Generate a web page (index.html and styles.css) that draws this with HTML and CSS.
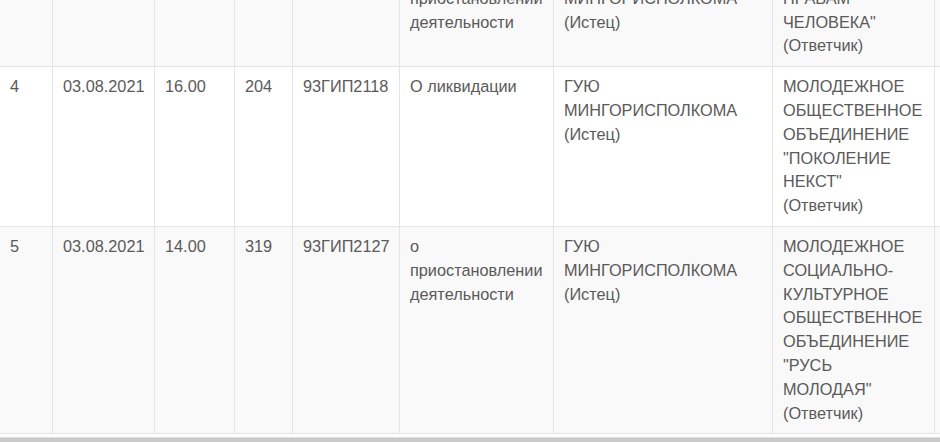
FILE: index.html
```html
<!DOCTYPE html>
<html lang="ru">
<head>
<meta charset="utf-8">
<title>Дела</title>
<link rel="stylesheet" href="styles.css">
</head>
<body>
<div class="viewport">
  <table class="cases">
    <colgroup>
      <col class="c-num"><col class="c-date"><col class="c-time"><col class="c-room"><col class="c-case"><col class="c-subj"><col class="c-plt"><col class="c-def"><col class="c-extra">
    </colgroup>
    <tbody>
      <tr class="odd">
        <td>3</td>
        <td>03.08.2021</td>
        <td>15.00</td>
        <td>204</td>
        <td>93ГИП2117</td>
        <td>о приостановлении деятельности</td>
        <td>ГУЮ МИНГОРИСПОЛКОМА (Истец)</td>
        <td class="def">ОО "ЦЕНТР ПО ПРАВАМ ЧЕЛОВЕКА" (Ответчик)</td>
        <td></td>
      </tr>
      <tr>
        <td>4</td>
        <td>03.08.2021</td>
        <td>16.00</td>
        <td>204</td>
        <td>93ГИП2118</td>
        <td>О ликвидации</td>
        <td>ГУЮ МИНГОРИСПОЛКОМА (Истец)</td>
        <td class="def">МОЛОДЕЖНОЕ ОБЩЕСТВЕННОЕ ОБЪЕДИНЕНИЕ "ПОКОЛЕНИЕ НЕКСТ" (Ответчик)</td>
        <td></td>
      </tr>
      <tr class="odd">
        <td>5</td>
        <td>03.08.2021</td>
        <td>14.00</td>
        <td>319</td>
        <td>93ГИП2127</td>
        <td>о приостановлении деятельности</td>
        <td>ГУЮ МИНГОРИСПОЛКОМА (Истец)</td>
        <td class="def">МОЛОДЕЖНОЕ СОЦИАЛЬНО-КУЛЬТУРНОЕ ОБЩЕСТВЕННОЕ ОБЪЕДИНЕНИЕ "РУСЬ МОЛОДАЯ" (Ответчик)</td>
        <td></td>
      </tr>
    </tbody>
  </table>
  <div class="scrollbar"></div>
</div>
</body>
</html>
```
FILE: styles.css
```css
html, body {
  margin: 0;
  padding: 0;
  background: #ffffff;
  overflow: hidden;
}
.viewport {
  width: 940px;
  height: 442px;
  overflow: hidden;
}
.cases {
  margin-top: -46px;
  margin-left: -1px;
  width: 1000px;
  table-layout: fixed;
  border-collapse: collapse;
  font-family: "Liberation Sans", Arial, Helvetica, sans-serif;
  font-size: 16.3px;
  line-height: 23.8px;
  color: #5a5a5a;
}
.cases td {
  vertical-align: top;
  padding: 8px 10px 8px 10px;
  border: 1px solid #e4e4e4;
}
.cases td.def {
  word-spacing: 3px;
}
.cases tr.odd td {
  background: #f9f9f9;
}
.c-num { width: 53px; }
.c-date { width: 102px; }
.c-time { width: 80px; }
.c-room { width: 58px; }
.c-case { width: 107px; }
.c-subj { width: 154px; }
.c-plt { width: 219px; }
.c-def { width: 162px; }
.c-extra { width: 66px; }
.scrollbar {
  margin-top: 3px;
  height: 7px;
  border-top: 1px solid #dedede;
  background: #c9c9c9;
}
```
